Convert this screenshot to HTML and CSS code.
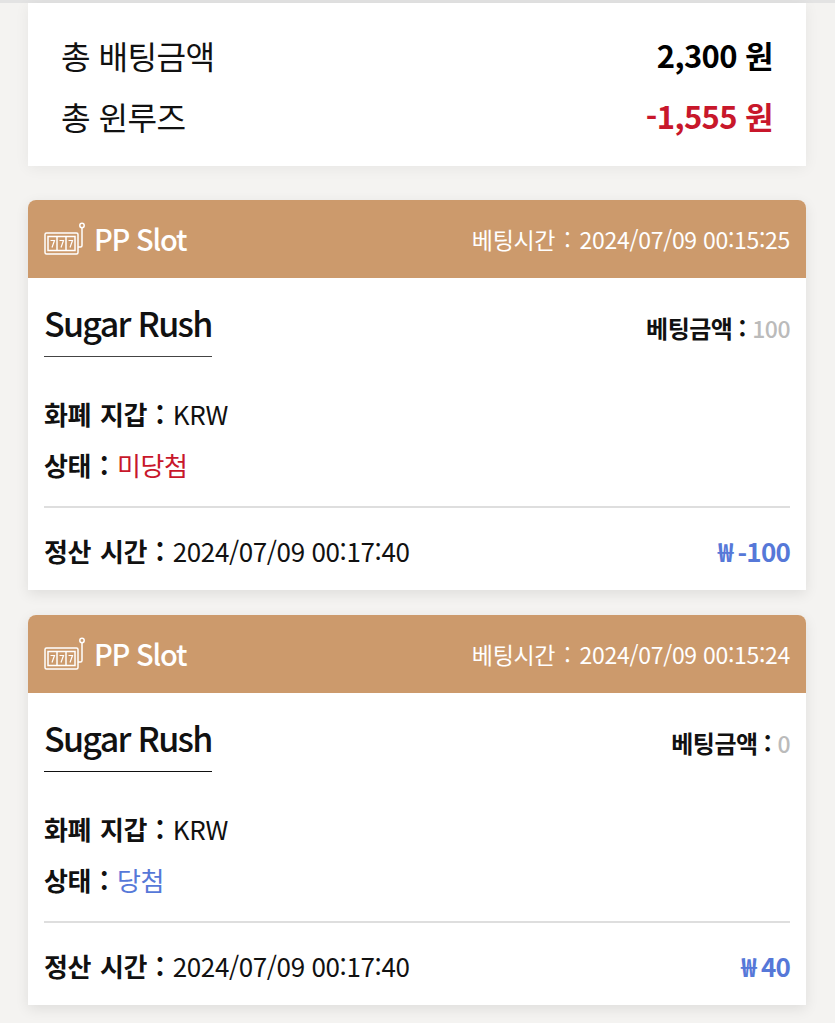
FILE: index.html
```html
<!DOCTYPE html>
<html lang="ko">

<head>
  <meta charset="UTF-8">
  <meta name="viewport" content="width=device-width, initial-scale=1.0">
  <title>Document</title>
  <link rel="stylesheet" href="styles.css">
</head>

<body>
  <div class="summary">
    <div class="summary-row">
      <span>총 배팅금액</span>
      <strong>2,300 원</strong>
    </div>
    <div class="summary-row">
      <span>총 윈루즈</span>
      <strong class="red">-1,555 원</strong>
    </div>
  </div>

  <div class="bet-card">
    <div class="bet-head">
      <div class="bet-provider">
        <svg class="slot-icon" viewBox="0 0 42 34" fill="none" stroke="#fff" stroke-width="1.5">
          <rect x="1" y="11" width="33" height="21" rx="1.5"/>
          <rect x="4" y="14.5" width="27" height="14"/>
          <path d="M13 14.5v14M22 14.5v14"/>
          <path d="M6.5 18.5h4l-2.5 7M15.5 18.5h4l-2.5 7M24.5 18.5h4l-2.5 7" stroke-width="1.2"/>
          <path d="M34 25h2.5c1 0 1.5-.6 1.5-1.5V6"/>
          <circle cx="38" cy="3.5" r="2.2"/>
        </svg>
        <span>PP Slot</span>
      </div>
      <div class="bet-time"><span class="time-label">베팅시간 :</span> 2024/07/09 00:15:25</div>
    </div>
    <div class="bet-body">
      <div class="bet-title-row">
        <h2 class="game-name">Sugar Rush</h2>
        <div class="bet-amount"><b>베팅금액 :</b> <span>100</span></div>
      </div>
      <div class="info-list">
        <div class="info-row"><b>화폐 지갑 :</b> KRW</div>
        <div class="info-row"><b>상태 :</b> <span class="red">미당첨</span></div>
      </div>
      <div class="bet-foot">
        <div class="info-row"><b>정산 시간 :</b> 2024/07/09 00:17:40</div>
        <div class="payout">₩ -100</div>
      </div>
    </div>
  </div>

  <div class="bet-card">
    <div class="bet-head">
      <div class="bet-provider">
        <svg class="slot-icon" viewBox="0 0 42 34" fill="none" stroke="#fff" stroke-width="1.5">
          <rect x="1" y="11" width="33" height="21" rx="1.5"/>
          <rect x="4" y="14.5" width="27" height="14"/>
          <path d="M13 14.5v14M22 14.5v14"/>
          <path d="M6.5 18.5h4l-2.5 7M15.5 18.5h4l-2.5 7M24.5 18.5h4l-2.5 7" stroke-width="1.2"/>
          <path d="M34 25h2.5c1 0 1.5-.6 1.5-1.5V6"/>
          <circle cx="38" cy="3.5" r="2.2"/>
        </svg>
        <span>PP Slot</span>
      </div>
      <div class="bet-time"><span class="time-label">베팅시간 :</span> 2024/07/09 00:15:24</div>
    </div>
    <div class="bet-body">
      <div class="bet-title-row">
        <h2 class="game-name">Sugar Rush</h2>
        <div class="bet-amount"><b>베팅금액 :</b> <span>0</span></div>
      </div>
      <div class="info-list">
        <div class="info-row"><b>화폐 지갑 :</b> KRW</div>
        <div class="info-row"><b>상태 :</b> <span class="blue">당첨</span></div>
      </div>
      <div class="bet-foot">
        <div class="info-row"><b>정산 시간 :</b> 2024/07/09 00:17:40</div>
        <div class="payout">₩ 40</div>
      </div>
    </div>
  </div>
</body>

</html>
```

FILE: styles.css
```css
* {
  box-sizing: border-box;
}

html,
body {
  height: 1023px;
  overflow: hidden;
}

body {
  margin: 0;
  padding: 3px 29px 0 28px;
  background-color: #f4f3f1;
  color: #111;
  font-family: "Noto Sans CJK KR", "Noto Sans", sans-serif;
  box-shadow: inset 0 3px 0 #e3e3e3;
}

.red {
  color: #c8172b;
}

.blue {
  color: #5678d8;
}

.summary {
  height: 163px;
  padding: 21px 33px 0 33px;
  background-color: #fff;
  box-shadow: 0 2px 14px rgba(0, 0, 0, 0.06);
}

.summary-row {
  display: flex;
  justify-content: space-between;
  align-items: center;
  height: 61px;
  font-size: 32.2px;
  letter-spacing: -0.6px;
}

.summary-row strong {
  font-size: 31px;
  font-weight: 700;
  color: #000;
}

.summary-row strong.red {
  color: #c8172b;
}

.bet-card {
  height: 390px;
  margin-top: 34px;
  background-color: #fff;
  border-radius: 8px 8px 0 0;
  box-shadow: 0 4px 14px rgba(0, 0, 0, 0.09);
  overflow: hidden;
}

.bet-card + .bet-card {
  margin-top: 25px;
}

.bet-head {
  display: flex;
  justify-content: space-between;
  align-items: center;
  height: 78px;
  padding: 0 16px;
  background-color: #cc9a6c;
  color: #fff;
}

.bet-provider {
  display: flex;
  align-items: center;
  gap: 8px;
  font-size: 29px;
  font-weight: 500;
  letter-spacing: -1.2px;
  line-height: 76px;
}

.bet-provider span {
  margin-top: -2px;
}

.slot-icon {
  width: 42px;
  height: 34px;
}

.bet-time {
  font-size: 23px;
  letter-spacing: -0.3px;
}

.time-label {
  margin-right: 3px;
  word-spacing: 3px;
}

.bet-body {
  padding: 0 16px;
}

.bet-title-row {
  display: flex;
  justify-content: space-between;
  align-items: center;
  height: 79px;
}

.game-name {
  margin: 0;
  height: 79px;
  line-height: 90px;
  border-bottom: 1px solid #444;
  font-size: 34px;
  font-weight: 500;
  letter-spacing: -1.7px;
}

.bet-card + .bet-card .game-name {
  border-bottom-color: #111;
}

.bet-amount {
  margin-top: 20px;
  font-size: 24px;
  letter-spacing: -0.5px;
}

.bet-amount span {
  color: #bbb;
  font-size: 23px;
  font-weight: 500;
}

.info-list {
  display: flex;
  flex-direction: column;
  gap: 8px;
  height: 151px;
  padding-top: 35px;
  border-bottom: 2px solid #dedede;
}

.info-row {
  height: 43px;
  line-height: 43px;
  font-size: 26px;
  letter-spacing: -0.4px;
}

.info-row b {
  margin-right: 2px;
  font-weight: 700;
  word-spacing: 2px;
}

.bet-foot {
  display: flex;
  justify-content: space-between;
  align-items: center;
  height: 82px;
  padding-top: 2px;
}

.payout {
  color: #5678d8;
  font-size: 26px;
  font-weight: 700;
  letter-spacing: -0.8px;
}
```
